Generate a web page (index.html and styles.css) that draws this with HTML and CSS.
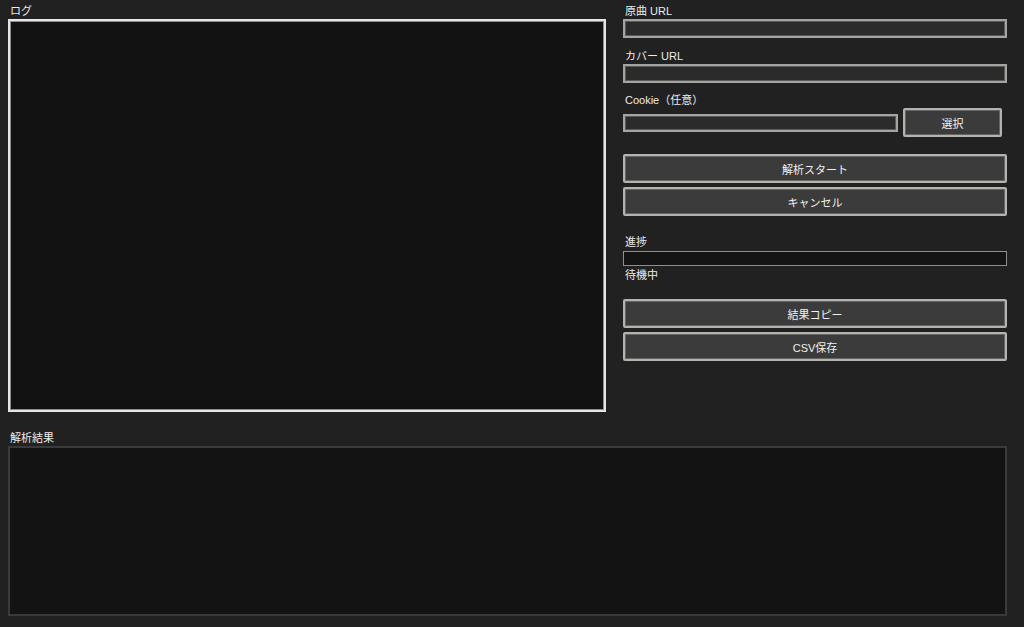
FILE: index.html
```html
<!DOCTYPE html>
<html lang="ja">
<head>
    <meta charset="UTF-8">
    <title>解析ツール</title>
    <link rel="stylesheet" href="styles.css">
</head>
<body>
    <div class="top">
        <div class="log-panel">
            <div class="label">ログ</div>
            <div class="log-box"></div>
        </div>

        <div class="side">
            <div class="label">原曲 URL</div>
            <input class="field" type="text">

            <div class="label gap-s">カバー URL</div>
            <input class="field" type="text">

            <div class="label gap-c">Cookie（任意）</div>
            <div class="cookie-row">
                <input class="field" type="text">
                <button class="btn pick-btn">選択</button>
            </div>

            <button class="btn gap-l">解析スタート</button>
            <button class="btn gap-xs">キャンセル</button>

            <div class="label gap-p">進捗</div>
            <div class="progress"><div class="progress-fill"></div></div>
            <div class="label status">待機中</div>

            <button class="btn gap-m">結果コピー</button>
            <button class="btn gap-xs">CSV保存</button>
        </div>
    </div>

    <div class="label result-label">解析結果</div>
    <div class="result-box"></div>
</body>
</html>
```

FILE: styles.css
```css
* {
    margin: 0;
    padding: 0;
    box-sizing: border-box;
}

body {
    background: #212121;
    color: #ececec;
    font-family: 'Liberation Sans', 'Noto Sans CJK JP', sans-serif;
    font-size: 11px;
    padding: 4px 17px 0 8px;
    height: 627px;
    overflow: hidden;
}

.top {
    display: grid;
    grid-template-columns: 598px 384px;
    column-gap: 17px;
    height: 408px;
}

.label {
    height: 15px;
    line-height: 15px;
    padding-left: 2px;
}

.log-panel {
    display: flex;
    flex-direction: column;
}

.log-box {
    flex: 1;
    background: #121212;
    border: 2px solid #e6e6e6;
    box-shadow: inset 0 0 0 1px #8c8c8c;
}

.side {
    display: flex;
    flex-direction: column;
}

.field {
    height: 19px;
    width: 100%;
    background: #2b2b2b;
    border: 2px solid #a4a4a0;
    box-shadow: inset 0 0 0 1px #5a5a58;
    outline: none;
    color: #ececec;
}

.gap-s {
    margin-top: 11px;
}

.gap-c {
    margin-top: 10px;
}

.gap-xs {
    margin-top: 4px;
}

.gap-m {
    margin-top: 16px;
}

.gap-l {
    margin-top: 17px;
}

.gap-p {
    margin-top: 19px;
}

.cookie-row {
    display: flex;
    align-items: center;
    gap: 5px;
    height: 29px;
    padding-right: 5px;
}

.cookie-row .field {
    flex: 1;
    height: 18px;
}

.btn {
    height: 29px;
    width: 100%;
    background: #3b3b3b;
    color: #f0f0f0;
    border: 2px solid #b4b4ae;
    border-radius: 2px;
    box-shadow: inset 0 0 0 1px #666;
    font-family: inherit;
    font-size: 11px;
}

.pick-btn {
    width: 99px;
    flex: none;
}

.progress {
    margin-top: 1px;
    height: 15px;
    background: #141414;
    border: 1px solid #8e8e8a;
}

.progress-fill {
    height: 100%;
    width: 0;
}

.status {
    margin-top: 2px;
}

.result-label {
    margin-top: 19px;
}

.result-box {
    height: 170px;
    width: 999px;
    background: #131313;
    border: 2px solid #3a3a3a;
}
```
